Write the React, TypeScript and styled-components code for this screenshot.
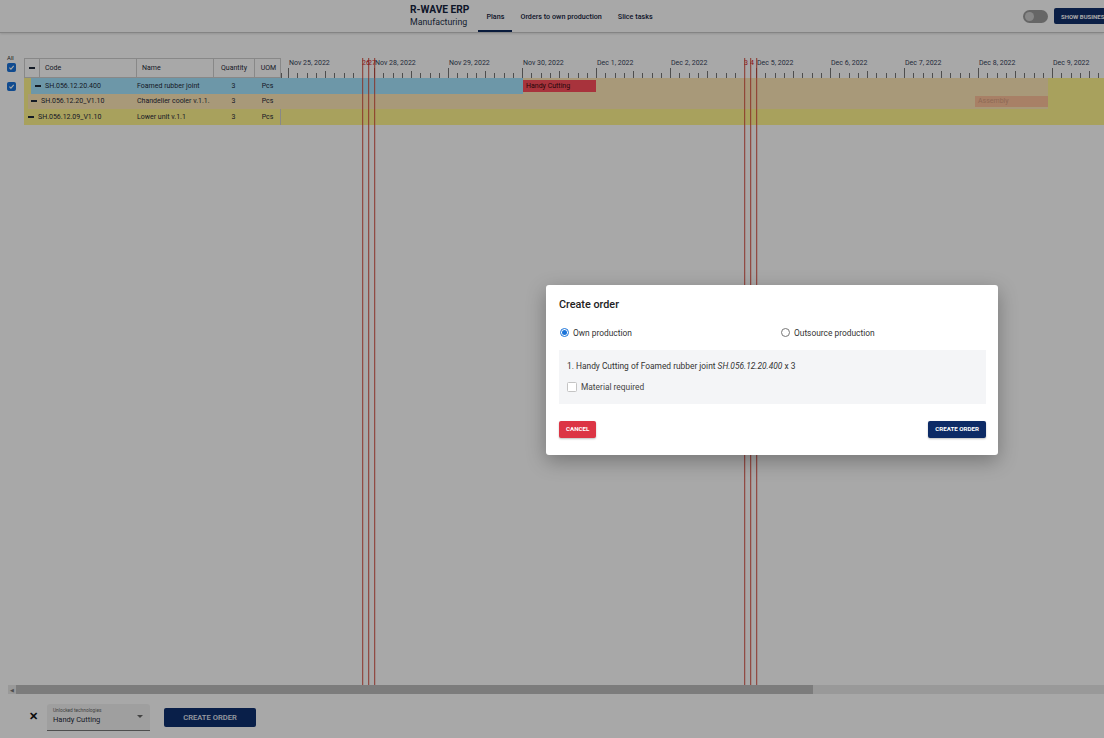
import React from "react";
import styled, { createGlobalStyle } from "styled-components";

const Global = createGlobalStyle`
  html, body { margin: 0; padding: 0; background: #fff; }
  body { font-family: Roboto, "Liberation Sans", Arial, sans-serif; color: #1f2a3a; }
  * { box-sizing: border-box; }
`;

const Page = styled.div`
  position: relative;
  width: 1104px;
  height: 738px;
  overflow: hidden;
  display: flex;
  flex-direction: column;
  background: #fff;
`;

const Header = styled.header`
  height: 33px;
  flex: none;
  display: flex;
  align-items: stretch;
  border-bottom: 1px solid #c8c8c8;
  box-shadow: 0 1px 2px rgba(0,0,0,0.12);
  padding-left: 410px;
  overflow: hidden;
`;

const Brand = styled.div`
  display: flex;
  flex-direction: column;
  justify-content: center;
  margin-right: 9px;
`;
const BrandTitle = styled.div`
  font-size: 10.2px;
  font-weight: 700;
  color: #16243e;
  line-height: 12px;
`;
const BrandSub = styled.div`
  font-size: 8.8px;
  color: #24324a;
  line-height: 12px;
`;

const Tab = styled.div<{ $active?: boolean }>`
  display: flex;
  align-items: center;
  padding: 0 8px;
  font-size: 7.2px;
  font-weight: 500;
  color: #16243e;
  border-bottom: 2px solid ${(p) => (p.$active ? "#0e2a5c" : "transparent")};
  padding-top: 2px;
`;

const Spacer = styled.div` flex: 1; `;

const Toggle = styled.div`
  align-self: center;
  flex: none;
  width: 25px;
  height: 13px;
  border-radius: 7px;
  background: #9c9c9c;
  position: relative;
  margin-right: 6px;
  &::after {
    content: "";
    position: absolute;
    left: 2px;
    top: 2px;
    width: 9px;
    height: 9px;
    border-radius: 50%;
    background: #cfcfcf;
  }
`;

const NavButton = styled.div`
  align-self: center;
  flex: none;
  width: 50px;
  height: 16px;
  padding-left: 7px;
  background: #12306b;
  color: #fff;
  font-size: 6px;
  font-weight: 700;
  display: flex;
  align-items: center;
  border-radius: 2px 0 0 2px;
  white-space: nowrap;
  overflow: hidden;
`;

const Content = styled.div`
  flex: none;
  height: 652px;
  padding-top: 25px;
  display: flex;
`;

const CheckCol = styled.div`
  width: 24px;
  flex: none;
  display: flex;
  flex-direction: column;
  align-items: flex-start;
  padding-left: 7px;
  margin-top: -4px;
`;
const AllLabel = styled.div`
  font-size: 6px;
  color: #333;
  line-height: 7px;
  margin-bottom: 2px;
`;
const Check = styled.div<{ $on?: boolean; $size?: number }>`
  width: ${(p) => p.$size ?? 9}px;
  height: ${(p) => p.$size ?? 9}px;
  border-radius: 1.5px;
  background: ${(p) => (p.$on ? "#1a73d9" : "#fff")};
  border: 1px solid ${(p) => (p.$on ? "#1a73d9" : "#c4c4c4")};
  display: flex;
  align-items: center;
  justify-content: center;
  flex: none;
`;
const CheckGap = styled.div` height: 10px; `;

const Table = styled.div`
  width: 257px;
  flex: none;
  display: flex;
  flex-direction: column;
  border-right: 1px solid #cfcfcf;
  align-self: flex-start;
`;
const Row = styled.div<{ $bg?: string; $head?: boolean }>`
  display: grid;
  grid-template-columns: 15px 97px 77px 41px 27px;
  height: ${(p) => (p.$head ? 20 : 15.5)}px;
  background: ${(p) => p.$bg ?? "#fff"};
  font-size: 7px;
  color: #1f2a3a;
  ${(p) => (p.$head ? "border: 1px solid #cfcfcf; border-right: none;" : "")}
`;
const Cell = styled.div<{ $center?: boolean; $pad?: number; $bg?: string; $border?: boolean; $shift?: number }>`
  display: flex;
  align-items: center;
  justify-content: ${(p) => (p.$center ? "center" : "flex-start")};
  padding-left: ${(p) => p.$pad ?? 5}px;
  margin-left: ${(p) => p.$shift ?? 0}px;
  background: ${(p) => p.$bg ?? "transparent"};
  border-right: ${(p) => (p.$border ? "1px solid #cfcfcf" : "none")};
  white-space: nowrap;
  overflow: hidden;
  gap: 4px;
`;
const Dash = styled.span`
  display: inline-block;
  width: 6px;
  height: 1.6px;
  background: #1f2a3a;
  flex: none;
`;

const Gantt = styled.div`
  position: relative;
  flex: 1;
  overflow: hidden;
  display: flex;
  flex-direction: column;
`;
const GanttHead = styled.div`
  display: flex;
  height: 20px;
  flex: none;
`;
const DayHead = styled.div<{ $w: number }>`
  width: ${(p) => p.$w}px;
  flex: none;
  display: flex;
  flex-direction: column;
  position: relative;
`;
const DayLabel = styled.div<{ $weekend?: boolean }>`
  height: 10px;
  font-size: 7px;
  line-height: 10px;
  padding-left: ${(p) => (p.$weekend ? 0 : 1)}px;
  color: ${(p) => (p.$weekend ? "#d0121e" : "#1f2a3a")};
  white-space: nowrap;
  position: relative;
  z-index: ${(p) => (p.$weekend ? 0 : 1)};
`;
const Ticks = styled.div`
  height: 10px;
  display: flex;
  align-items: flex-end;
`;
const Tick = styled.div<{ $w: number; $major?: boolean; $mid?: boolean }>`
  width: ${(p) => p.$w}px;
  flex: none;
  height: ${(p) => (p.$major ? 10 : p.$mid ? 7 : 5)}px;
  border-left: 1px solid #777;
`;

const GRow = styled.div<{ $bg: string }>`
  position: relative;
  height: 15.5px;
  background: ${(p) => p.$bg};
  flex: none;
`;
const Bar = styled.div<{ $color: string; $text: string; $top: number; $h: number }>`
  position: absolute;
  top: ${(p) => p.$top}px;
  height: ${(p) => p.$h}px;
  background: ${(p) => p.$color};
  color: ${(p) => p.$text};
  font-size: 7px;
  padding-left: 3px;
  display: flex;
  align-items: center;
  white-space: nowrap;
  overflow: hidden;
`;
const RedLine = styled.div`
  position: absolute;
  top: 0;
  bottom: 0;
  width: 1px;
  background: rgba(205, 55, 40, 0.7);
  box-shadow: 1px 0 0 rgba(230, 150, 140, 0.35);
`;

const Scroll = styled.div`
  height: 9px;
  flex: none;
  margin-left: 8px;
  background: #e8e8e8;
  display: flex;
  align-items: stretch;
`;
const ScrollArrow = styled.div`
  width: 8px;
  display: flex;
  align-items: center;
  justify-content: center;
  font-size: 5px;
  color: #777;
`;
const ScrollThumb = styled.div`
  width: 797px;
  background: #bdbdbd;
`;

const Bottom = styled.div`
  flex: 1;
  display: flex;
  align-items: center;
  padding-left: 29px;
  gap: 9px;
`;
const Close = styled.div`
  font-size: 11px;
  font-weight: 700;
  color: #111;
  width: 9px;
  line-height: 10px;
  margin-top: 2px;
`;
const Select = styled.div`
  width: 103px;
  height: 27px;
  background: #f2f2f2;
  border-bottom: 1px solid #777;
  border-radius: 3px 3px 0 0;
  padding: 4px 6px 0 6px;
  position: relative;
  margin-top: 2px;
`;
const SelLabel = styled.div`
  font-size: 4.8px;
  color: #666;
  line-height: 6px;
`;
const SelValue = styled.div`
  font-size: 7.5px;
  color: #1f2a3a;
  line-height: 11px;
`;
const Caret = styled.div`
  position: absolute;
  right: 7px;
  top: 11px;
  width: 0;
  height: 0;
  border-left: 3px solid transparent;
  border-right: 3px solid transparent;
  border-top: 3px solid #666;
`;
const MainButton = styled.div`
  margin-left: 5px;
  width: 92px;
  height: 19px;
  border-radius: 2px;
  background: #0f2f70;
  color: #e8ecf5;
  font-size: 7.6px;
  font-weight: 500;
  display: flex;
  align-items: center;
  justify-content: center;
  margin-top: 2px;
`;

const Overlay = styled.div`
  position: absolute;
  inset: 0;
  background: rgba(0, 0, 0, 0.34);
  display: flex;
  align-items: center;
  justify-content: center;
  padding-left: 440px;
`;
const Dialog = styled.div`
  width: 452px;
  height: 170px;
  background: #fff;
  border-radius: 3px;
  box-shadow: 0 6px 20px rgba(0, 0, 0, 0.3);
  padding: 13px 12px 0 13px;
  display: flex;
  flex-direction: column;
  margin-top: 1px;
`;
const DTitle = styled.div`
  font-size: 10.8px;
  font-weight: 500;
  color: #222;
  line-height: 14px;
`;
const RadioRow = styled.div`
  display: grid;
  grid-template-columns: 221px 1fr;
  margin-top: 16px;
  padding-left: 1px;
`;
const RadioItem = styled.div`
  display: flex;
  align-items: center;
  gap: 4px;
  font-size: 8.4px;
  color: #333;
`;
const Radio = styled.div<{ $on?: boolean }>`
  width: 9px;
  height: 9px;
  border-radius: 50%;
  border: 1px solid ${(p) => (p.$on ? "#1a73d9" : "#777")};
  display: flex;
  align-items: center;
  justify-content: center;
  &::after {
    content: "";
    width: 5px;
    height: 5px;
    border-radius: 50%;
    background: ${(p) => (p.$on ? "#1a73d9" : "transparent")};
  }
`;
const Panel = styled.div`
  margin-top: 12px;
  height: 54px;
  background: #f4f5f7;
  padding: 11px 8px 0 8px;
  display: flex;
  flex-direction: column;
  gap: 11px;
`;
const PanelText = styled.div`
  font-size: 8.4px;
  color: #333;
  line-height: 10px;
  i { font-style: italic; }
`;
const CheckLine = styled.div`
  display: flex;
  align-items: center;
  gap: 4px;
  font-size: 8.4px;
  color: #444;
`;
const Actions = styled.div`
  display: flex;
  justify-content: space-between;
  margin-top: 17px;
`;
const DButton = styled.div<{ $bg: string }>`
  height: 17px;
  padding: 0 7px;
  background: ${(p) => p.$bg};
  color: #fff;
  font-size: 6.2px;
  font-weight: 700;
  border-radius: 2px;
  display: flex;
  align-items: center;
  box-shadow: 0 1px 2px rgba(0,0,0,0.25);
`;

type Day = { label: string; w: number; weekend?: boolean };
const days: Day[] = [
  { label: "", w: 7 },
  { label: "Nov 25, 2022", w: 74 },
  { label: "26", w: 6, weekend: true },
  { label: "27", w: 6, weekend: true },
  { label: "Nov 28, 2022", w: 74 },
  { label: "Nov 29, 2022", w: 74 },
  { label: "Nov 30, 2022", w: 74 },
  { label: "Dec 1, 2022", w: 74 },
  { label: "Dec 2, 2022", w: 74 },
  { label: "3", w: 6, weekend: true },
  { label: "4", w: 6, weekend: true },
  { label: "Dec 5, 2022", w: 74 },
  { label: "Dec 6, 2022", w: 74 },
  { label: "Dec 7, 2022", w: 74 },
  { label: "Dec 8, 2022", w: 74 },
  { label: "Dec 9, 2022", w: 74 },
];

const offsets: number[] = [];
{
  let x = 0;
  for (const d of days) {
    offsets.push(x);
    x += d.w;
  }
}
const redLines: number[] = [];
days.forEach((d, i) => {
  if (d.weekend) {
    redLines.push(offsets[i]);
    if (!days[i + 1]?.weekend) redLines.push(offsets[i] + d.w);
  }
});

const YELLOW = "#fff48e";
const TAN = "#ffe9b8";
const BLUE = "#a6e6ff";

function DayTicks({ d }: { d: Day }) {
  if (d.weekend) return <Ticks />;
  if (d.w < 74)
    return (
      <Ticks>
        <Tick $w={d.w} />
      </Ticks>
    );
  const n = 8;
  const w = d.w / n;
  return (
    <Ticks>
      {Array.from({ length: n }).map((_, i) => (
        <Tick key={i} $w={w} $major={i === 0} $mid={i === 4} />
      ))}
    </Ticks>
  );
}

const CheckMark = () => (
  <svg width="7" height="7" viewBox="0 0 10 10">
    <path d="M2 5.2 L4.2 7.3 L8.2 2.8" stroke="#fff" strokeWidth="1.6" fill="none" />
  </svg>
);

export default function App() {
  return (
    <>
      <Global />
      <Page>
        <Header>
          <Brand>
            <BrandTitle>R-WAVE ERP</BrandTitle>
            <BrandSub>Manufacturing</BrandSub>
          </Brand>
          <Tab $active>Plans</Tab>
          <Tab>Orders to own production</Tab>
          <Tab>Slice tasks</Tab>
          <Spacer />
          <Toggle />
          <NavButton>SHOW BUSINESS</NavButton>
        </Header>

        <Content>
          <CheckCol>
            <AllLabel>All</AllLabel>
            <Check $on>
              <CheckMark />
            </Check>
            <CheckGap />
            <Check $on>
              <CheckMark />
            </Check>
          </CheckCol>

          <Table>
            <Row $head>
              <Cell $pad={4} $border><Dash /></Cell>
              <Cell $border>Code</Cell>
              <Cell $border>Name</Cell>
              <Cell $center $pad={0} $border>Quantity</Cell>
              <Cell $center $pad={0}>UOM</Cell>
            </Row>
            <Row $bg={YELLOW}>
              <Cell $pad={0} $bg={`linear-gradient(to right, ${YELLOW} 7px, ${BLUE} 7px)`} />
              <Cell $pad={0} $bg={BLUE} $shift={-4}>
                <Dash /> SH.056.12.20.400
              </Cell>
              <Cell $pad={1} $bg={BLUE}>Foamed rubber joint</Cell>
              <Cell $center $pad={0} $bg={BLUE}>3</Cell>
              <Cell $center $pad={0} $bg={BLUE}>Pcs</Cell>
            </Row>
            <Row $bg={YELLOW}>
              <Cell $pad={0} $bg={`linear-gradient(to right, ${YELLOW} 4px, ${TAN} 4px)`} />
              <Cell $pad={0} $bg={TAN} $shift={-8}>
                <Dash /> SH.056.12.20_V1.10
              </Cell>
              <Cell $pad={1} $bg={TAN}>Chandelier cooler v.1.1.</Cell>
              <Cell $center $pad={0} $bg={TAN}>3</Cell>
              <Cell $center $pad={0} $bg={TAN}>Pcs</Cell>
            </Row>
            <Row $bg={YELLOW}>
              <Cell $pad={0} />
              <Cell $pad={0} $shift={-11}>
                <Dash /> SH.056.12.09_V1.10
              </Cell>
              <Cell $pad={1}>Lower unit v.1.1</Cell>
              <Cell $center $pad={0}>3</Cell>
              <Cell $center $pad={0}>Pcs</Cell>
            </Row>
          </Table>

          <Gantt>
            <GanttHead>
              {days.map((d, i) => (
                <DayHead key={i} $w={d.w}>
                  <DayLabel $weekend={d.weekend}>{d.label}</DayLabel>
                  <DayTicks d={d} />
                </DayHead>
              ))}
            </GanttHead>
            <GRow $bg={`linear-gradient(to right, ${BLUE} 242px, ${TAN} 242px, ${TAN} 767px, ${YELLOW} 767px)`}>
              <Bar $color="#ff4e5c" $text="#3a0a0e" $top={2} $h={12} style={{ left: 242, width: 73 }}>
                Handy Cutting
              </Bar>
            </GRow>
            <GRow $bg={`linear-gradient(to right, ${TAN} 767px, ${YELLOW} 767px)`}>
              <Bar $color="#ffc39c" $text="#d8a080" $top={2} $h={11} style={{ left: 694, width: 73 }}>
                Assembly
              </Bar>
            </GRow>
            <GRow $bg={YELLOW} />
            {redLines.map((x, i) => (
              <RedLine key={i} style={{ left: x }} />
            ))}
          </Gantt>
        </Content>

        <Scroll>
          <ScrollArrow>◀</ScrollArrow>
          <ScrollThumb />
        </Scroll>

        <Bottom>
          <Close>✕</Close>
          <Select>
            <SelLabel>Unlocked technologies</SelLabel>
            <SelValue>Handy Cutting</SelValue>
            <Caret />
          </Select>
          <MainButton>CREATE ORDER</MainButton>
        </Bottom>

        <Overlay>
          <Dialog>
            <DTitle>Create order</DTitle>
            <RadioRow>
              <RadioItem>
                <Radio $on /> Own production
              </RadioItem>
              <RadioItem>
                <Radio /> Outsource production
              </RadioItem>
            </RadioRow>
            <Panel>
              <PanelText>
                1. Handy Cutting of Foamed rubber joint <i>SH.056.12.20.400</i> x 3
              </PanelText>
              <CheckLine>
                <Check $size={10} /> Material required
              </CheckLine>
            </Panel>
            <Actions>
              <DButton $bg="#dc3545">CANCEL</DButton>
              <DButton $bg="#0d2b66">CREATE ORDER</DButton>
            </Actions>
          </Dialog>
        </Overlay>
      </Page>
    </>
  );
}
